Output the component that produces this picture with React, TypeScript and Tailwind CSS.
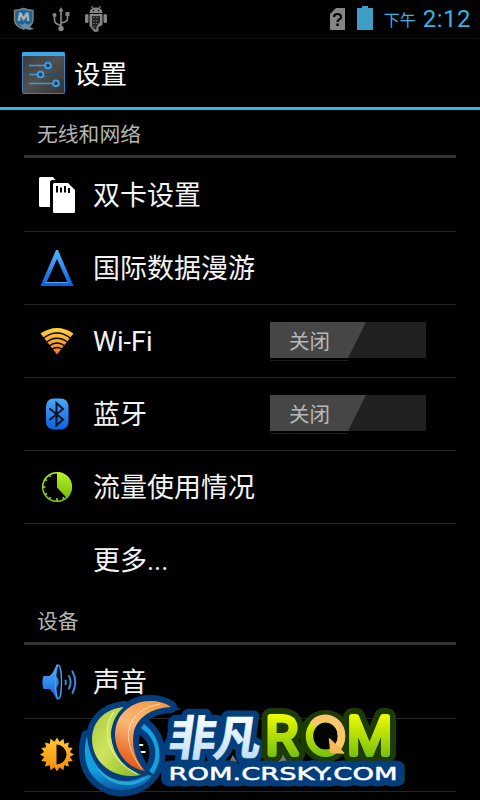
import type { ReactNode } from "react";

function SimCardsIcon() {
  return (
    <svg viewBox="0 0 40 40" className="h-10 w-10">
      <path d="M3.5 2H16l2.5 3h-3A2.500 2.500 0 0 0 13 7.500V32H3.500A1.500 1.500 0 0 1 2 30.500v-27A1.500 1.500 0 0 1 3.500 2z" fill="#fff" />
      <path d="M17.500 8H31l7 7v21.500a1.500 1.500 0 0 1-1.500 1.500h-19a1.500 1.500 0 0 1-1.500-1.500v-27A1.500 1.500 0 0 1 17.500 8z" fill="#fff" />
      <path d="M20 11v6.500M24 12.500v5M28 11v6.500M32 13v5" stroke="#000" strokeWidth="2" />
    </svg>
  );
}

function RoamingIcon() {
  return (
    <svg viewBox="0 0 40 40" className="h-10 w-10">
      <defs>
        <linearGradient id="roam" x1="0" y1="0" x2="0" y2="1">
          <stop offset="0" stopColor="#55b4ff" />
          <stop offset="1" stopColor="#0b5fe0" />
        </linearGradient>
      </defs>
      <path fillRule="evenodd" d="M19 2h2l15.500 36h-33zM20 11L9.500 34.500h21z" fill="url(#roam)" />
      <path d="M8.500 34.500h23" stroke="#4ea3f5" strokeWidth="1" />
    </svg>
  );
}

function WifiIcon() {
  return (
    <svg viewBox="0 0 40 40" className="h-10 w-10">
      <defs>
        <linearGradient id="wifi" x1="0" y1="0" x2="0" y2="1">
          <stop offset="0" stopColor="#ffd640" />
          <stop offset="1" stopColor="#f07a10" />
        </linearGradient>
      </defs>
      <path d="M3.500 12.500Q20 1.500 36.500 12.500L20 33.500z" fill="url(#wifi)" />
      <g fill="none" stroke="#000" strokeWidth="1.300">
        <path d="M6 17.500Q20 6.500 34 17.500" />
        <path d="M9 21.500Q20 13 31 21.500" />
        <path d="M12 25Q20 19 28 25" />
        <path d="M14.500 28.500Q20 24.500 25.500 28.500" />
      </g>
    </svg>
  );
}

function BluetoothIcon() {
  return (
    <svg viewBox="0 0 40 40" className="h-10 w-10">
      <defs>
        <linearGradient id="bt" x1="0" y1="0" x2="0" y2="1">
          <stop offset="0" stopColor="#4ba6f8" />
          <stop offset="1" stopColor="#0a62e4" />
        </linearGradient>
      </defs>
      <rect x="9" y="4.500" width="22.500" height="31" rx="7.500" fill="url(#bt)" />
      <path d="M12.500 14.500l13.500 11-6.500 6V9l6.500 6-13.500 11" fill="none" stroke="#061222" strokeWidth="2" />
    </svg>
  );
}

function DataUsageIcon() {
  return (
    <svg viewBox="0 0 40 40" className="h-10 w-10">
      <defs>
        <linearGradient id="data" x1="0" y1="0" x2="0" y2="1">
          <stop offset="0" stopColor="#b4f52a" />
          <stop offset="1" stopColor="#7cb80c" />
        </linearGradient>
      </defs>
      <circle cx="20" cy="20" r="14.300" fill="#000" stroke="url(#data)" strokeWidth="1.500" />
      <path d="M20 5a15 15 0 0 1 10 26.200L20 20.500z" fill="url(#data)" />
      <path d="M6 20h2.500M20 34v-3M8 12.500l2 1M12.500 8l1 2M8 27.500l2-1M12.500 32l1-2M27 32l-1-2" stroke="#9cdc1e" strokeWidth="1.500" />
    </svg>
  );
}

function SoundIcon() {
  return (
    <svg viewBox="0 0 40 40" className="h-10 w-10">
      <defs>
        <linearGradient id="sound" x1="0" y1="0" x2="0" y2="1">
          <stop offset="0" stopColor="#58b2fc" />
          <stop offset="1" stopColor="#0d62dc" />
        </linearGradient>
      </defs>
      <path d="M6.500 14h6c3-2.500 5-6 7-11.500h2v35h-2c-2-4.500-4-8-7-10.500h-6c-1.500-4-1.500-9 0-13z" fill="url(#sound)" />
      <ellipse cx="21.500" cy="20" rx="3" ry="16.700" fill="#04101f" stroke="#4a9ff0" strokeWidth="1.300" />
      <path d="M19 14c3.500 3 3.500 9 0 12z" fill="#2e86e8" />
      <g fill="none" stroke="#3c88d8" strokeWidth="2" strokeLinecap="round">
        <path d="M28.500 18.500q1 1.800 0 3.500" />
        <path d="M32 14q3.200 6.200 0 12.500" />
        <path d="M35.500 9.500q5.500 10.800 0 21.500" />
      </g>
    </svg>
  );
}

function BrightnessIcon() {
  const spikes = Array.from({ length: 32 }, (_, i) => {
    const r = i % 2 ? 13 : 17;
    const a = (i * Math.PI) / 16;
    return `${(20 + r * Math.sin(a)).toFixed(1)},${(19.5 - r * Math.cos(a)).toFixed(1)}`;
  }).join(" ");
  return (
    <svg viewBox="0 0 40 40" className="h-10 w-10">
      <defs>
        <linearGradient id="sun" x1="0" y1="0" x2="0" y2="1">
          <stop offset="0" stopColor="#ffc832" />
          <stop offset="1" stopColor="#f58a0c" />
        </linearGradient>
      </defs>
      <polygon points={spikes} fill="url(#sun)" />
      <path d="M19.500 9.500a10 10 0 0 1 0 20z" fill="#0c0600" />
    </svg>
  );
}

function SettingsIcon() {
  return (
    <svg viewBox="0 0 43 42" className="h-[42px] w-[43px]">
      <defs>
        <linearGradient id="panel" x1="0" y1="0" x2="1" y2="1">
          <stop offset="0" stopColor="#3a3a3a" />
          <stop offset="0.500" stopColor="#505050" />
          <stop offset="1" stopColor="#333" />
        </linearGradient>
      </defs>
      <rect x="0.500" y="0.500" width="42" height="41" rx="1" fill="url(#panel)" stroke="#2d86c4" />
      <path d="M0 1.500Q0 0 1.500 0h40Q43 0 43 1.500V4H0z" fill="#38a8ec" />
      <path d="M7 13.500h29M7 22.500h29M7 31.500h29" stroke="#1c4a70" strokeWidth="1.200" />
      <path d="M7 13.500h17M7 22.500h10M7 31.500h25" stroke="#3a9ae0" strokeWidth="1.600" />
      <g fill="#27445c" stroke="#3ba0ec" strokeWidth="1.900">
        <circle cx="26" cy="13.500" r="2.900" />
        <circle cx="18.500" cy="22.500" r="2.900" />
        <circle cx="34" cy="31.300" r="2.900" />
      </g>
    </svg>
  );
}

function ShieldIcon() {
  return (
    <svg viewBox="0 0 22 24" className="h-6 w-[22px]">
      <path d="M1.500 3.500Q7 3 10.500 1.500q4 1.500 9.500 2v9Q20 19 10.500 22 1.500 19 1.500 12.500z" fill="#1d6797" stroke="#7d8488" strokeWidth="1.400" />
      <path d="M4.500 14L6 5.500h2.500l2 4 2.500-4h2.500l1 8.500h-2.500l-.5-4.500-2.500 4h-1L8 9.500l-.8 4.500z" fill="#a8b1b6" />
      <path d="M5 16l4 2 3-2 3 2 4-2-2 4 4 2-5 1-3-1-4-2z" fill="#6b8b9c" />
    </svg>
  );
}

function UsbIcon() {
  return (
    <svg viewBox="0 0 18 25" className="h-[25px] w-[18px]" fill="none" stroke="#858585" strokeWidth="1.700">
      <path d="M9 3v19M9 18.500Q2.500 17 2.500 13V8M9 16q6.500-1 6.500-4.500V7.500" />
      <path d="M9 0l2.500 4.500h-5z" fill="#858585" stroke="none" />
      <circle cx="9" cy="21.500" r="2.700" fill="#858585" stroke="none" />
      <circle cx="2.500" cy="8" r="2" fill="#858585" stroke="none" />
      <path d="M13.500 5h4v4h-4z" fill="#858585" stroke="none" />
    </svg>
  );
}

function AndroidIcon() {
  return (
    <svg viewBox="0 0 22 26" className="h-[26px] w-[22px]">
      <path d="M6.500 0l1.500 2.500M15.500 0L14 2.500" stroke="#858585" strokeWidth="1.200" />
      <path d="M4.500 7Q5 1.500 11 1.500T17.500 7z" fill="#858585" />
      <circle cx="8.500" cy="4.500" r="0.800" fill="#000" />
      <circle cx="13.500" cy="4.500" r="0.800" fill="#000" />
      <rect x="0" y="8" width="3.500" height="9" rx="1.500" fill="#858585" />
      <rect x="18.500" y="8" width="3.500" height="9" rx="1.500" fill="#858585" />
      <path d="M4.500 8h13v11l-4 2v4.500l-4 .5-5-6z" fill="#858585" />
      <path d="M7 10h8v6l-3 4-1 4-4-3z" fill="#252525" />
      <path d="M8 11.500h6M8 14.500h5M8 17.500h4M8 20.500h3" stroke="#777" strokeDasharray="1.300 1.500" />
    </svg>
  );
}

function NoSimIcon() {
  return (
    <svg viewBox="0 0 15 22" className="h-[22px] w-[15px]">
      <path d="M6 0h9v22H0V6z" fill="#858585" />
      <path d="M4 9q0-3 3.500-3T11 8.800q0 1.700-1.700 2.600Q7.500 12.200 7.500 14" fill="none" stroke="#000" strokeWidth="2.200" />
      <path d="M6.300 15.500h2.500V18H6.300z" />
    </svg>
  );
}

function StatusBar() {
  return (
    <div className="flex h-[39px] items-start border-b border-[#111] text-[#33b5e5]">
      <div className="flex pl-[13px] pt-[7px]">
        <ShieldIcon />
        <div className="ml-[17px]"><UsbIcon /></div>
        <div className="-mt-px ml-[15px]"><AndroidIcon /></div>
      </div>
      <div className="ml-auto flex items-start pr-[9px]">
        <div className="pt-2"><NoSimIcon /></div>
        <svg viewBox="0 0 16 24" className="ml-3 mt-1.5 h-6 w-4">
          <path d="M5 0h6v2h5v22H0V2h5z" fill="#3e9dc4" />
        </svg>
        <span className="ml-[11px] mt-[9px] text-[16px] leading-6">下午</span>
        <span className="ml-[7px] mt-[5px] text-[24px] leading-7 tracking-[0.5px]">2:12</span>
      </div>
    </div>
  );
}

function Category({ title }: { title: string }) {
  return (
    <div className="mb-px h-12 border-b-[3px] border-[#333] pl-[13px] text-[20.8px] leading-[50px] text-[#b5b5b5]">
      {title}
    </div>
  );
}

function Toggle() {
  return (
    <div className="mr-[30px] mt-[17px] w-[156px] self-start">
      <div className="h-9 bg-[#202020]">
        <div className="h-9 w-24 bg-[#464646] pl-[19px] text-[20.5px] leading-[40px] text-[#b8b8b8] [clip-path:polygon(0_0,100%_0,78px_100%,0_100%)]">
          关闭
        </div>
      </div>
      <div className="mt-0.5 h-px w-[78px] bg-[#1d1d1d]" />
    </div>
  );
}

type RowProps = { icon?: ReactNode; label: string; toggle?: boolean; last?: boolean };

function Row({ icon, label, toggle, last }: RowProps) {
  return (
    <div className={`flex h-[73px] items-center border-b ${last ? "border-transparent" : "border-[#262626]"}`}>
      <div className="ml-[13px] h-10 w-10">{icon}</div>
      <div className="ml-4 flex-1 whitespace-nowrap pt-0.5 text-[27px] leading-9 text-[#f3f3f3]">{label}</div>
      {toggle && <Toggle />}
    </div>
  );
}

const crescents = {
  green: "M124 707C104 709 92 722 92 740C93 764 114 780 141 775C125 768 111 752 111 733C112 722 117 713 124 707z",
  orange: "M171 707C163 701 151 700 141 702C124 707 115 719 115 736C116 754 128 768 145 771C135 760 131 745 134 731C138 718 150 708 171 707z",
  blue: "M144 724C158 734 163 753 157 767C148 789 119 798 100 783C86 773 82 755 87 736C89 760 102 780 124 781C139 781 150 774 154 762C158 748 153 736 141 728z",
};

// Watermark logo laid over the bottom of the list
function RomLogo() {
  return (
    <svg viewBox="76 690 336 110" className="absolute left-[76px] top-[690px] h-[110px] w-[336px]">
      <defs>
        <linearGradient id="lgGreen" x1="0" y1="0" x2="1" y2="1">
          <stop offset="0" stopColor="#a7c83a" />
          <stop offset="0.450" stopColor="#cfe45e" />
          <stop offset="1" stopColor="#84b81c" />
        </linearGradient>
        <linearGradient id="lgOrange" x1="0.700" y1="0" x2="0.400" y2="1">
          <stop offset="0" stopColor="#f59a48" />
          <stop offset="0.400" stopColor="#fbb878" />
          <stop offset="1" stopColor="#e4560e" />
        </linearGradient>
        <linearGradient id="lgBlue" x1="0" y1="0" x2="0" y2="1">
          <stop offset="0" stopColor="#14a4e4" />
          <stop offset="0.700" stopColor="#10a0dc" />
          <stop offset="1" stopColor="#0c58a8" />
        </linearGradient>
        <linearGradient id="lgWord" gradientUnits="userSpaceOnUse" x1="0" y1="715" x2="0" y2="757">
          <stop offset="0" stopColor="#ecfa00" />
          <stop offset="1" stopColor="#76c010" />
        </linearGradient>
        <linearGradient id="lgHan" gradientUnits="userSpaceOnUse" x1="0" y1="-42" x2="0" y2="4">
          <stop offset="0" stopColor="#ffffff" />
          <stop offset="1" stopColor="#bfe0f8" />
        </linearGradient>
      </defs>

      <path d="M278 762l4-15h4l4 15zM229 762l4-7 4 7z" fill="#777" />

      <g fill="#053e7c" stroke="#053e7c" strokeWidth="12" strokeLinejoin="round">
        <path d={crescents.blue} />
        <path d={crescents.green} />
        <path d={crescents.orange} />
      </g>
      <path d={crescents.blue} fill="url(#lgBlue)" />
      <path d="M96 766C112 786 138 785 149 774C140 790 108 790 96 766z" fill="#35c8e4" opacity="0.600" />
      <path d={crescents.green} fill="url(#lgGreen)" stroke="#053e7c" strokeWidth="4" paintOrder="stroke" />
      <path d="M114 712C103 725 103 756 137 774" fill="none" stroke="#f0f8b0" strokeWidth="1.200" opacity="0.700" />
      <path d={crescents.orange} fill="url(#lgOrange)" stroke="#053e7c" strokeWidth="7" paintOrder="stroke" />
      <path d="M160 704C128 710 117 736 142 769" fill="none" stroke="#fff0d8" strokeWidth="1" opacity="0.700" />

      <g
        fontFamily="'Noto Sans CJK SC', sans-serif"
        fontWeight="700"
        fontSize="47"
        strokeLinejoin="round"
        transform="translate(167 755) skewX(-8)"
      >
        <text x="0" y="0" textLength="92" fill="#053e7c" stroke="#053e7c" strokeWidth="13">非凡</text>
        <text x="0" y="0" textLength="92" fill="url(#lgHan)" stroke="url(#lgHan)" strokeWidth="0.800">非凡</text>
      </g>

      <g fontFamily="Roboto, sans-serif" fontWeight="300" fontSize="51" strokeLinejoin="round" strokeLinecap="round">
        <g fill="#1d3b04" stroke="#1d3b04" strokeWidth="18">
          <text x="266" y="754">R</text>
          <circle cx="325.500" cy="736" r="16" fill="none" strokeWidth="20" />
          <text x="347.500" y="754">M</text>
        </g>
        <g fill="url(#lgWord)" stroke="url(#lgWord)" strokeWidth="6">
          <text x="266" y="754">R</text>
          <text x="347.500" y="754">M</text>
        </g>
        <ellipse cx="325.500" cy="736" rx="16" ry="17.300" fill="#020500" stroke="url(#lgWord)" strokeWidth="7.500" />
        <path d="M313 724.500C322 713 341 718 341.500 736C341.500 741 340 745 337 748" fill="none" stroke="#fac66c" strokeWidth="7.500" strokeLinecap="butt" />
        <path d="M329.500 739l1.500 13.500 12.500 .5-4.500-5z" fill="#f9b858" stroke="#f9b858" strokeWidth="1.500" />
      </g>

      <g fontFamily="'DejaVu Sans', sans-serif" fontSize="18" strokeLinejoin="round">
        <text x="168.500" y="779.500" textLength="229" lengthAdjust="spacingAndGlyphs" fill="#053e7c" stroke="#053e7c" strokeWidth="13">
          ROM.CRSKY.COM
        </text>
        <text x="168.500" y="779.500" textLength="229" lengthAdjust="spacingAndGlyphs" fill="#fff" stroke="#fff" strokeWidth="0.500">
          ROM.CRSKY.COM
        </text>
      </g>
    </svg>
  );
}

export default function App() {
  return (
    <div className="relative h-[800px] w-[480px] overflow-hidden bg-black font-['Roboto','Noto_Sans_CJK_SC',sans-serif]">
      <StatusBar />
      <header className="flex h-[71px] items-center border-b-[3px] border-[#33b5e5] pl-[22px]">
        <SettingsIcon />
        <h1 className="ml-[9px] pt-[3px] text-[26.500px] leading-9 text-white">设置</h1>
      </header>
      <main className="px-6">
        <Category title="无线和网络" />
        <Row icon={<SimCardsIcon />} label="双卡设置" />
        <Row icon={<RoamingIcon />} label="国际数据漫游" />
        <Row icon={<WifiIcon />} label="Wi-Fi" toggle />
        <Row icon={<BluetoothIcon />} label="蓝牙" toggle />
        <Row icon={<DataUsageIcon />} label="流量使用情况" />
        <Row label="更多..." last />
        <Category title="设备" />
        <Row icon={<SoundIcon />} label="声音" />
        <Row icon={<BrightnessIcon />} label="显示" />
      </main>
      <RomLogo />
    </div>
  );
}
